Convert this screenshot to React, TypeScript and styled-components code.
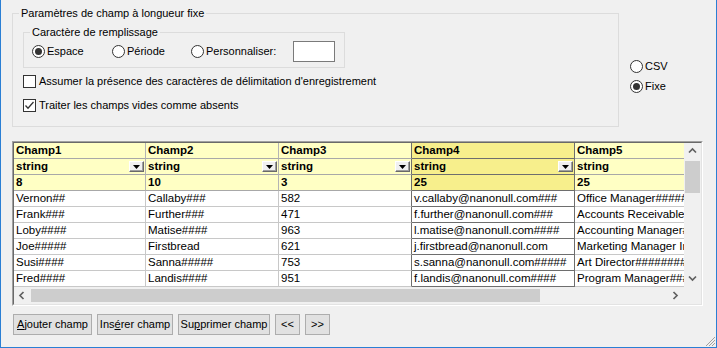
import React from 'react';
import styled, { createGlobalStyle } from 'styled-components';

const UI_FONT = `"Liberation Sans", Arial, sans-serif`;
const GRID_FONT = `"Liberation Sans", Arial, sans-serif`;

const GlobalStyle = createGlobalStyle`
  html, body { margin: 0; padding: 0; background: #f0f0f0; }
  body { width: 717px; height: 348px; overflow: hidden; }
  #root { width: 717px; height: 348px; }
`;

const Window = styled.div`
  position: relative;
  box-sizing: border-box;
  width: 717px;
  height: 348px;
  background: #f0f0f0;
  border-left: 1px solid #2a7fd4;
  border-right: 1px solid #2a7fd4;
  border-bottom: 1px solid #2a7fd4;
  padding: 6px 0 0 11px;
  font-family: ${UI_FONT};
  font-size: 11px;
  color: #000;
  display: flex;
  flex-direction: column;
`;

const TopSection = styled.div`
  display: flex;
  align-items: flex-start;
  gap: 11px;
`;

const GroupBox = styled.fieldset<{ $w: number; $h: number }>`
  margin: 0;
  padding: 0;
  min-width: 0;
  box-sizing: border-box;
  width: ${(p) => p.$w}px;
  height: ${(p) => p.$h}px;
  border: 1px solid #dcdcdc;
`;

const Legend = styled.legend`
  margin-left: 6px;
  padding: 0 2px;
  line-height: 15px;
  font-size: 11px;
`;

const OuterBody = styled.div`
  padding: 4px 0 0 10px;
  display: flex;
  flex-direction: column;
`;

const RadioRow = styled.div`
  display: flex;
  align-items: center;
  height: 21px;
  padding: 1px 0 5px 8px;
`;

const RadioOption = styled.label<{ $w?: number }>`
  display: flex;
  align-items: center;
  gap: 2px;
  flex: none;
  width: ${(p) => (p.$w ? `${p.$w}px` : 'auto')};
  height: 13px;
  line-height: 13px;
`;

const RadioCircle = styled.span<{ $checked?: boolean }>`
  width: 13px;
  height: 13px;
  box-sizing: border-box;
  border-radius: 50%;
  border: 1px solid #333;
  background: #fff;
  display: inline-flex;
  align-items: center;
  justify-content: center;
  flex: none;
  &::after {
    content: '';
    width: 7px;
    height: 7px;
    border-radius: 50%;
    background: ${(p) => (p.$checked ? '#333' : 'transparent')};
  }
`;

const SmallInput = styled.div`
  width: 42px;
  height: 21px;
  box-sizing: border-box;
  border: 1px solid #7a7a7a;
  background: #fff;
  flex: none;
`;

const CheckRow = styled.label<{ $mt: number }>`
  display: flex;
  align-items: center;
  gap: 3px;
  height: 16px;
  margin-top: ${(p) => p.$mt}px;
  white-space: nowrap;
`;

const CheckBox = styled.span`
  width: 13px;
  height: 13px;
  box-sizing: border-box;
  border: 1px solid #333;
  background: #fff;
  display: inline-flex;
  flex: none;
`;

const SideRadios = styled.div`
  padding-top: 54px;
  display: flex;
  flex-direction: column;
  gap: 7px;
`;

const Frame = styled.div`
  margin-top: 14px;
  width: 691px;
  height: 165px;
  box-sizing: border-box;
  border: 1px solid;
  border-color: #a0a0a0 #ffffff #ffffff #a0a0a0;
`;

const FrameInner = styled.div`
  box-sizing: border-box;
  height: 100%;
  border: 1px solid;
  border-color: #696969 #e3e3e3 #e3e3e3 #696969;
  display: grid;
  grid-template-columns: 670px 17px;
  grid-template-rows: 144px 17px;
`;

const Viewport = styled.div`
  overflow: hidden;
  background: #fff;
`;

const GridRow = styled.div`
  display: flex;
  height: 16px;
`;

const Cell = styled.div<{
  $w: number;
  $head?: boolean;
  $sel?: boolean;
  $darkRight?: boolean;
}>`
  flex: none;
  box-sizing: border-box;
  width: ${(p) => p.$w}px;
  height: 16px;
  padding-left: 2px;
  font-family: ${GRID_FONT};
  font-size: 11.5px;
  font-weight: ${(p) => (p.$head ? 700 : 400)};
  line-height: 15px;
  white-space: nowrap;
  overflow: hidden;
  display: flex;
  align-items: center;
  justify-content: space-between;
  background: ${(p) => (p.$head ? (p.$sel ? '#f7ef8c' : '#ffffc4') : '#ffffff')};
  border-bottom: 1px solid
    ${(p) => (p.$sel ? '#6e6e6e' : p.$head ? '#a8a8a8' : '#c8c8c8')};
  border-right: 1px solid
    ${(p) =>
      p.$sel || p.$darkRight ? '#6e6e6e' : p.$head ? '#b4b4b4' : '#c8c8c8'};
`;

const DropButton = styled.span`
  flex: none;
  width: 15px;
  height: 11px;
  margin-right: 1px;
  box-sizing: border-box;
  background: #f0f0f0;
  border: 1px solid;
  border-color: #ffffff #696969 #696969 #ffffff;
  box-shadow: inset -1px -1px 0 #a0a0a0;
  display: flex;
  align-items: center;
  justify-content: center;
`;

const VScroll = styled.div`
  background: #f0f0f0;
  display: flex;
  flex-direction: column;
`;

const HScroll = styled.div`
  background: #f0f0f0;
  display: flex;
  align-items: center;
`;

const Corner = styled.div`
  background: #f0f0f0;
`;

const ArrowBox = styled.div`
  flex: none;
  width: 17px;
  height: 17px;
  display: flex;
  align-items: center;
  justify-content: center;
`;

const VThumb = styled.div`
  width: 15px;
  height: 32px;
  margin: 1px 0 0 1px;
  background: #cdcdcd;
`;

const HThumb = styled.div`
  width: 509px;
  height: 13px;
  background: #cdcdcd;
`;

const Spacer = styled.div`
  flex: 1;
`;

const ButtonRow = styled.div`
  margin: 8px 0 0 1px;
  display: flex;
  gap: 5px;
`;

const Button = styled.button<{ $w: number }>`
  width: ${(p) => p.$w}px;
  height: 21px;
  box-sizing: border-box;
  margin: 0;
  padding: 0;
  background: #e1e1e1;
  border: 1px solid #adadad;
  border-radius: 0;
  font-family: ${UI_FONT};
  font-size: 11px;
  color: #000;
  line-height: 19px;
  text-align: center;
  white-space: nowrap;
`;

const Grip = styled.svg`
  position: absolute;
  right: 0;
  bottom: 0;
`;

const Chevron = ({ dir }: { dir: 'up' | 'down' | 'left' | 'right' }) => {
  const pts = {
    up: '1,5.5 4.5,2 8,5.5',
    down: '1,2.5 4.5,6 8,2.5',
    left: '5.5,1 2,4.5 5.5,8',
    right: '2.5,1 6,4.5 2.5,8',
  }[dir];
  return (
    <svg width="9" height="9" viewBox="0 0 9 9">
      <polyline points={pts} fill="none" stroke="#606060" strokeWidth="1.7" />
    </svg>
  );
};

const Tri = () => (
  <svg width="7" height="4" viewBox="0 0 7 4">
    <polygon points="0,0 7,0 3.5,4" fill="#000" />
  </svg>
);

const Check = () => (
  <svg width="11" height="11" viewBox="0 0 11 11">
    <polyline points="1.5,5.5 4,8.2 9.5,2" fill="none" stroke="#333" strokeWidth="1.3" />
  </svg>
);

const widths = [132, 133, 133, 163, 170];
const SEL = 3;

const headers = ['Champ1', 'Champ2', 'Champ3', 'Champ4', 'Champ5'];
const lengths = ['8', '10', '3', '25', '25'];
const rows = [
  ['Vernon##', 'Callaby###', '582', 'v.callaby@nanonull.com###', 'Office Manager########'],
  ['Frank###', 'Further###', '471', 'f.further@nanonull.com###', 'Accounts Receivable####'],
  ['Loby####', 'Matise####', '963', 'l.matise@nanonull.com####', 'Accounting Manager####'],
  ['Joe#####', 'Firstbread', '621', 'j.firstbread@nanonull.com', 'Marketing Manager Intern'],
  ['Susi####', 'Sanna#####', '753', 's.sanna@nanonull.com#####', 'Art Director##########'],
  ['Fred####', 'Landis####', '951', 'f.landis@nanonull.com####', 'Program Manager#######'],
];

export default function App() {
  return (
    <>
      <GlobalStyle />
      <Window>
        <TopSection>
          <GroupBox $w={607} $h={121}>
            <Legend>Paramètres de champ à longueur fixe</Legend>
            <OuterBody>
              <GroupBox $w={322} $h={43}>
                <Legend>Caractère de remplissage</Legend>
                <RadioRow>
                  <RadioOption $w={80}>
                    <RadioCircle $checked />
                    Espace
                  </RadioOption>
                  <RadioOption $w={79}>
                    <RadioCircle />
                    Période
                  </RadioOption>
                  <RadioOption $w={102}>
                    <RadioCircle />
                    Personnaliser:
                  </RadioOption>
                  <SmallInput />
                </RadioRow>
              </GroupBox>
              <CheckRow $mt={5}>
                <CheckBox />
                Assumer la présence des caractères de délimitation d'enregistrement
              </CheckRow>
              <CheckRow $mt={8}>
                <CheckBox>
                  <Check />
                </CheckBox>
                Traiter les champs vides comme absents
              </CheckRow>
            </OuterBody>
          </GroupBox>
          <SideRadios>
            <RadioOption>
              <RadioCircle />
              CSV
            </RadioOption>
            <RadioOption>
              <RadioCircle $checked />
              Fixe
            </RadioOption>
          </SideRadios>
        </TopSection>

        <Frame>
          <FrameInner>
            <Viewport>
              <GridRow>
                {headers.map((h, i) => (
                  <Cell key={h} $w={widths[i]} $head $sel={i === SEL} $darkRight={i === SEL - 1}>
                    {h}
                  </Cell>
                ))}
              </GridRow>
              <GridRow>
                {headers.map((h, i) => (
                  <Cell key={h} $w={widths[i]} $head $sel={i === SEL} $darkRight={i === SEL - 1}>
                    string
                    <DropButton>
                      <Tri />
                    </DropButton>
                  </Cell>
                ))}
              </GridRow>
              <GridRow>
                {lengths.map((l, i) => (
                  <Cell key={i} $w={widths[i]} $head $sel={i === SEL} $darkRight={i === SEL - 1}>
                    {l}
                  </Cell>
                ))}
              </GridRow>
              {rows.map((r, ri) => (
                <GridRow key={ri}>
                  {r.map((v, i) => (
                    <Cell key={i} $w={widths[i]} $sel={i === SEL} $darkRight={i === SEL - 1}>
                      {v}
                    </Cell>
                  ))}
                </GridRow>
              ))}
            </Viewport>
            <VScroll>
              <ArrowBox>
                <Chevron dir="up" />
              </ArrowBox>
              <VThumb />
              <Spacer />
              <ArrowBox>
                <Chevron dir="down" />
              </ArrowBox>
            </VScroll>
            <HScroll>
              <ArrowBox>
                <Chevron dir="left" />
              </ArrowBox>
              <HThumb />
              <Spacer />
              <ArrowBox>
                <Chevron dir="right" />
              </ArrowBox>
            </HScroll>
            <Corner />
          </FrameInner>
        </Frame>

        <ButtonRow>
          <Button $w={79}>
            <u>A</u>jouter champ
          </Button>
          <Button $w={76}>
            Ins<u>é</u>rer champ
          </Button>
          <Button $w={92}>
            Su<u>p</u>primer champ
          </Button>
          <Button $w={25}>&lt;&lt;</Button>
          <Button $w={25}>&gt;&gt;</Button>
        </ButtonRow>

        <Grip width="12" height="12" viewBox="0 0 12 12">
          <g stroke="#a0a0a0" strokeWidth="1">
            <line x1="11" y1="2" x2="2" y2="11" />
            <line x1="11" y1="5" x2="5" y2="11" />
            <line x1="11" y1="8" x2="8" y2="11" />
          </g>
        </Grip>
      </Window>
    </>
  );
}
